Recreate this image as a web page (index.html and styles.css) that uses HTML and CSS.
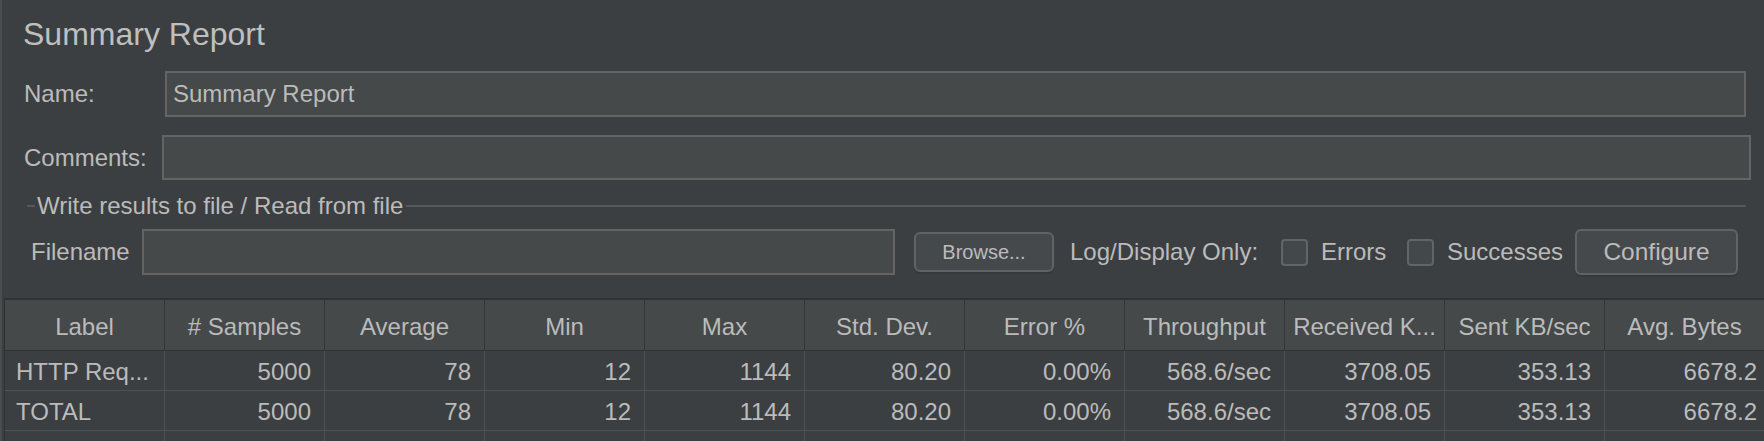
FILE: index.html
```html
<!DOCTYPE html>
<html lang="en">
<head>
  <meta charset="UTF-8">
  <title>Summary Report</title>
  <link rel="stylesheet" href="styles.css">
</head>
<body>
  <div class="panel">
    <div class="form">
      <h1 class="title">Summary Report</h1>

      <div class="field">
        <label>Name:</label>
        <input class="text-input" type="text" value="Summary Report">
      </div>

      <div class="field comments">
        <label>Comments:</label>
        <input class="text-input" type="text" value="">
      </div>

      <div class="group">
        <div class="group-head">
          <span class="rule short"></span>
          <span class="group-title">Write results to file / Read from file</span>
          <span class="rule"></span>
        </div>
        <div class="file-row">
          <label class="file-label">Filename</label>
          <input class="text-input file-input" type="text" value="">
          <button class="btn browse">Browse...</button>
          <span class="log-label">Log/Display Only:</span>
          <span class="check"></span>
          <span class="check-label errors">Errors</span>
          <span class="check second"></span>
          <span class="check-label successes">Successes</span>
          <button class="btn configure">Configure</button>
        </div>
      </div>
    </div>

    <div class="results">
      <div class="grid-row head">
        <div class="cell">Label</div>
        <div class="cell"># Samples</div>
        <div class="cell">Average</div>
        <div class="cell">Min</div>
        <div class="cell">Max</div>
        <div class="cell">Std. Dev.</div>
        <div class="cell">Error %</div>
        <div class="cell">Throughput</div>
        <div class="cell">Received K...</div>
        <div class="cell">Sent KB/sec</div>
        <div class="cell">Avg. Bytes</div>
      </div>
      <div class="grid-row">
        <div class="cell name">HTTP Req...</div>
        <div class="cell">5000</div>
        <div class="cell">78</div>
        <div class="cell">12</div>
        <div class="cell">1144</div>
        <div class="cell">80.20</div>
        <div class="cell">0.00%</div>
        <div class="cell">568.6/sec</div>
        <div class="cell">3708.05</div>
        <div class="cell">353.13</div>
        <div class="cell last">6678.2</div>
      </div>
      <div class="grid-row">
        <div class="cell name">TOTAL</div>
        <div class="cell">5000</div>
        <div class="cell">78</div>
        <div class="cell">12</div>
        <div class="cell">1144</div>
        <div class="cell">80.20</div>
        <div class="cell">0.00%</div>
        <div class="cell">568.6/sec</div>
        <div class="cell">3708.05</div>
        <div class="cell">353.13</div>
        <div class="cell last">6678.2</div>
      </div>
      <div class="grid-row">
        <div class="cell"></div>
        <div class="cell"></div>
        <div class="cell"></div>
        <div class="cell"></div>
        <div class="cell"></div>
        <div class="cell"></div>
        <div class="cell"></div>
        <div class="cell"></div>
        <div class="cell"></div>
        <div class="cell"></div>
        <div class="cell"></div>
      </div>
    </div>
  </div>
</body>
</html>
```

FILE: styles.css
```css
body {
  margin: 0;
  width: 1764px;
  height: 441px;
  overflow: hidden;
  background-color: #3c3f41;
  color: #bbbbbb;
  font-family: "Liberation Sans", Arial, sans-serif;
  font-size: 24px;
}
.panel {
  height: 441px;
  box-sizing: border-box;
  overflow: hidden;
  border-left: 2px solid #4a4d4f;
}
.form {
  padding: 14px 18px 0 22px;
}
.title {
  margin: 0 0 0 -1px;
  height: 40px;
  font-size: 32px;
  line-height: 40px;
  font-weight: normal;
  color: #bfbfbf;
}
.field {
  display: flex;
  align-items: center;
  height: 46px;
  margin-top: 17px;
}
.field label {
  width: 141px;
  flex: none;
}
.field.comments {
  height: 45px;
  margin-top: 18px;
  margin-right: -5px;
}
.field.comments label {
  width: 138px;
}
.text-input {
  flex: 1;
  height: 100%;
  box-sizing: border-box;
  padding: 0 6px;
  background-color: #45494a;
  border: 2px solid #646464;
  color: #bbbbbb;
  font: inherit;
  outline: none;
}
.group {
  margin-top: 14px;
}
.group-head {
  display: flex;
  align-items: center;
  height: 24px;
  line-height: 24px;
  margin-left: 3px;
}
.rule {
  flex: 1;
  height: 2px;
  background-color: #56595b;
}
.rule.short {
  flex: none;
  width: 8px;
}
.group-title {
  padding: 0 3px 0 2px;
}
.file-row {
  display: flex;
  align-items: center;
  height: 46px;
  margin-top: 11px;
  margin-left: 7px;
}
.file-label {
  width: 111px;
  flex: none;
}
.file-input {
  flex: none;
  width: 753px;
}
.btn {
  flex: none;
  box-sizing: border-box;
  background-color: #46494b;
  border: 2px solid #5f6365;
  border-radius: 6px;
  box-shadow: 0 2px 0 #363839;
  color: #bbbbbb;
  font-family: inherit;
  padding: 0;
}
.browse {
  width: 140px;
  height: 40px;
  margin-left: 19px;
  font-size: 20px;
}
.configure {
  width: 163px;
  height: 46px;
  margin-left: 16px;
  font-size: 24.5px;
}
.log-label {
  width: 189px;
  margin-left: 16px;
  flex: none;
  white-space: nowrap;
}
.check {
  flex: none;
  width: 27px;
  height: 27px;
  box-sizing: border-box;
  margin-left: 22px;
  background-color: #43494a;
  border: 2px solid #626566;
  border-radius: 4px;
}
.check.second {
  margin-left: 23px;
}
.check-label {
  margin-left: 13px;
  flex: none;
  white-space: nowrap;
}
.errors {
  width: 63px;
}
.successes {
  width: 112px;
}
.results {
  height: 146px;
  margin-top: 23px;
  margin-left: 2px;
  overflow: hidden;
  border-top: 2px solid #2f3133;
  border-left: 1px solid #2f3133;
}
.grid-row {
  display: grid;
  grid-template-columns: repeat(11, 160px);
  height: 40px;
}
.cell {
  box-sizing: border-box;
  border-right: 1px solid #4e5254;
  border-bottom: 1px solid #4e5254;
  padding: 0 13px;
  line-height: 41px;
  text-align: right;
  white-space: nowrap;
  overflow: hidden;
}
.cell.name {
  text-align: left;
  padding-left: 11px;
}
.cell.last {
  padding-right: 7px;
}
.grid-row.head {
  height: 51px;
}
.head .cell {
  background-color: #45494a;
  border-right-color: #333537;
  border-bottom-color: #303234;
  padding: 3px 0 0;
  line-height: 47px;
  text-align: center;
}
```
